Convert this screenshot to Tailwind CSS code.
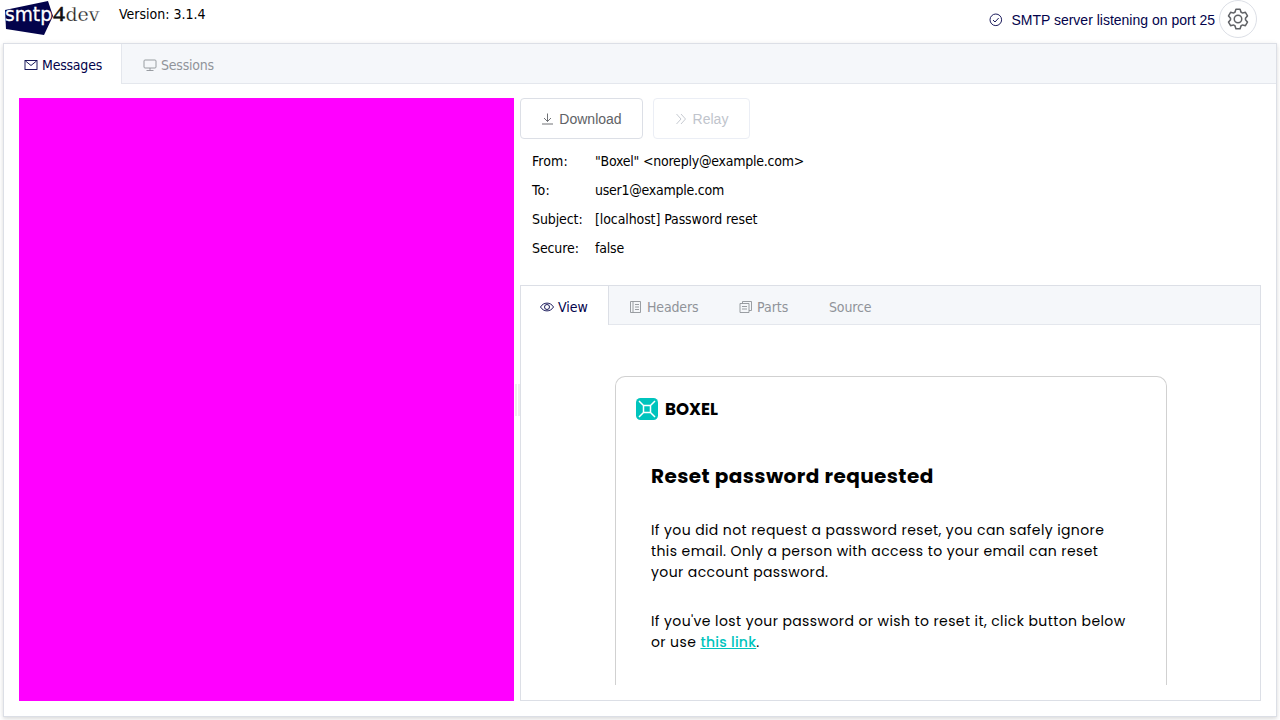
<!DOCTYPE html>
<html lang="en">
<head>
<meta charset="utf-8">
<title>smtp4dev</title>
<script src="https://cdn.jsdelivr.net/npm/@tailwindcss/browser@4"></script>
</head>
<body class="w-[1280px] h-[720px] overflow-hidden bg-white flex flex-col text-sm text-black font-['DejaVu_Sans_Condensed','DejaVu_Sans',sans-serif]">
<header class="h-[43px] shrink-0 flex justify-between">
  <div class="flex">
    <svg class="w-[105px] h-[38px] shrink-0" viewBox="0 0 105 38">
      <polygon points="5,10 48,1 53,16 44,35 6,29" fill="#03034b"/>
      <text x="5" y="20.500" font-family="DejaVu Sans" font-size="19.500" fill="#fff" stroke="#fff" stroke-width=".3" textLength="47" lengthAdjust="spacingAndGlyphs">smtp</text>
      <text x="53" y="20.500" font-family="Liberation Serif" font-size="20" fill="#111" stroke="#111" stroke-width=".5" textLength="12" lengthAdjust="spacingAndGlyphs">4</text>
      <text x="65.500" y="20.500" font-family="DejaVu Serif" font-size="19" fill="#222" stroke="#fff" stroke-width=".25" textLength="34" lengthAdjust="spacingAndGlyphs">dev</text>
    </svg>
    <span class="ml-[14px] mt-[4px] leading-5 whitespace-nowrap">Version: 3.1.4</span>
  </div>
  <div class="flex pr-[23px] font-['Liberation_Sans',sans-serif] text-[#03034b]">
    <svg class="w-[14px] h-[14px] mt-[13px] mr-2" viewBox="0 0 14 14" fill="none" stroke="currentColor" stroke-width=".9"><circle cx="6.800" cy="6.800" r="5.800"/><path d="M4 7l2 2 3.700-4"/></svg>
    <span class="mt-[10px] leading-5 whitespace-nowrap">SMTP server listening on port 25</span>
    <div class="ml-[4px] w-[38px] h-[38px] rounded-full border border-[#dcdfe6] flex items-center justify-center text-[#606266]">
      <svg class="w-[24px] h-[24px]" viewBox="0 0 1024 1024" fill="currentColor"><path d="M600.7 64a32 32 0 0 1 30.5 22.2l35.2 109.4c14.7 7.2 28.7 15.4 42.4 24.4l112.3-24.2a32 32 0 0 1 34.4 15.4L944.3 364.800a32 32 0 0 1-4 37.500l-77.100 85.100a357 357 0 0 1 0 49l77.100 85.200a32 32 0 0 1 4 37.500l-88.700 153.600a32 32 0 0 1-34.400 15.300L708.800 803.900c-13.400 9-27.700 17.200-42.300 24.400l-35.300 109.500A32 32 0 0 1 600.700 960H423.300a32 32 0 0 1-30.500-22.200l-35.100-109.300a351 351 0 0 1-42.600-24.600L202.800 828.200a32 32 0 0 1-34.400-15.400L79.700 659.200a32 32 0 0 1 4-37.500l77.100-85.200a357 357 0 0 1 0-48.900L83.700 402.400a32 32 0 0 1-4-37.500L168.400 211.300a32 32 0 0 1 34.400-15.300l112.300 24.200c13.700-9.100 27.900-17.400 42.600-24.600l35.200-109.400A32 32 0 0 1 423.200 64zm-23.400 64H446.700l-36.400 113-24.500 12c-12 5.900-23.700 12.600-34.800 20.200l-22.800 15.400-116.100-25-65.300 113.200 79.700 88.200-2 27.100a293 293 0 0 0 0 40.200l2 27.100-79.800 88.200 65.300 113.200 116.200-25 22.700 15.300c11.200 7.600 22.800 14.300 34.800 20.200l24.600 12L446.700 896h130.700l36.500-113.100 24.400-12a290 290 0 0 0 34.700-20.100l22.700-15.300 116.300 25 65.300-113.200-79.800-88.200 2-27.100a293 293 0 0 0 0-40.300l-2-27.100 79.800-88.100-65.300-113.200-116.300 24.900-22.700-15.200a290 290 0 0 0-34.700-20.100l-24.400-12zM512 320a192 192 0 1 1 0 384 192 192 0 0 1 0-384m0 64a128 128 0 1 0 0 256 128 128 0 0 0 0-256"/></svg>
    </div>
  </div>
</header>
<main class="mx-[3px] mb-[3px] flex-1 min-h-0 border border-[#dcdfe6] shadow-[0_2px_4px_rgba(0,0,0,0.12),0_0_6px_rgba(0,0,0,0.04)] flex flex-col">
  <nav class="h-10 shrink-0 bg-[#f5f7fa] border-b border-[#e4e7ed] flex text-[#909399]">
    <div class="w-[118px] h-10 bg-white border-r border-[#e4e7ed] flex items-center pl-5 pt-px text-[#03034b] whitespace-nowrap">
      <svg class="w-[14px] h-[14px] mr-1 shrink-0" viewBox="0 0 14 14" fill="none" stroke="currentColor" stroke-width=".9"><rect x="1" y="2.500" width="12" height="9"/><path d="M1.500 3L7 7.500 12.500 3"/></svg><span class="tracking-[-0.22px]">Messages</span>
    </div>
    <div class="flex items-center pl-[21px] pt-[3px] whitespace-nowrap">
      <svg class="w-[14px] h-[14px] mr-1 shrink-0" viewBox="0 0 14 14" fill="none" stroke="currentColor" stroke-width=".9"><rect x="1" y="2" width="12" height="8" rx="1"/><path d="M7 10v2.500M3.500 12.500h7"/></svg><span class="tracking-[-0.22px]">Sessions</span>
    </div>
  </nav>
  <div class="flex-1 min-h-0 flex p-[15px] pt-[14px]">
    <div class="w-[494.500px] mr-[0.500px] shrink-0 bg-[#ff00ff]"></div>
    <div class="w-[6px] shrink-0 flex items-center justify-center gap-px"><i class="w-[2px] h-8 bg-[#eee]"></i><i class="w-[2px] h-8 bg-[#eee]"></i></div>
    <section class="flex-1 min-w-0 flex flex-col">
      <div class="flex gap-[10px] h-[41px] shrink-0 font-['Liberation_Sans',sans-serif]">
        <div class="w-[123px] h-[41px] border border-[#dcdfe6] rounded flex items-center justify-center text-[#606266]">
          <svg class="w-[14px] h-[14px] mr-1" viewBox="0 0 14 14" fill="none" stroke="currentColor" stroke-width=".9"><path d="M6.500 1.500v8M3 6L6.500 9.500 10 6M1 12h11"/></svg><span>Download</span>
        </div>
        <div class="w-[97px] h-[41px] border border-[#ebeef5] rounded flex items-center justify-center text-[#c0c4cc]">
          <svg class="w-[14px] h-[14px] mr-1" viewBox="0 0 14 14" fill="none" stroke="currentColor" stroke-width=".9"><path d="M1.500 2l4.500 5-4.500 5M6 2l4.500 5L6 12"/></svg><span>Relay</span>
        </div>
      </div>
      <div class="pt-[8px] pl-[12px] h-[146px] shrink-0 grid grid-cols-[63px_1fr] auto-rows-[29px] leading-[29px] whitespace-nowrap tracking-[-0.1px]">
        <span class="tracking-[0.1px]">From:</span><span class="tracking-[-0.23px]">"Boxel" &lt;noreply@example.com&gt;</span>
        <span class="tracking-[0.3px]">To:</span><span class="tracking-[-0.25px]">user1@example.com</span>
        <span>Subject:</span><span>[localhost] Password reset</span>
        <span>Secure:</span><span class="tracking-[-0.2px]">false</span>
      </div>
      <div class="flex-1 min-h-0 border border-[#dcdfe6] flex flex-col">
        <nav class="h-[39px] shrink-0 bg-[#f5f7fa] border-b border-[#e4e7ed] flex text-[#909399] whitespace-nowrap">
          <div class="w-[88px] h-[39px] bg-white border-r border-[#dcdfe6] flex items-center pl-[19px] pt-[3px] text-[#03034b]">
            <svg class="w-[14px] h-[14px] mr-1 shrink-0" viewBox="0 0 14 14" fill="none" stroke="currentColor" stroke-width=".9"><path d="M.5 7C3.500 1.800 10.500 1.800 13.500 7 10.500 12.200 3.500 12.200.5 7z"/><circle cx="7" cy="7" r="2.500"/></svg><span>View</span>
          </div>
          <div class="w-[109px] flex items-center pl-5 pt-1"><svg class="w-[14px] h-[14px] mr-1 shrink-0" viewBox="0 0 14 14" fill="none" stroke="currentColor" stroke-width=".9"><path d="M1.500 1.500h10v11h-10zM4 1.500v11M6 4.500h4M6 7h4M6 9.500h4"/></svg><span class="tracking-[-0.15px]">Headers</span></div>
          <div class="w-[91px] flex items-center pl-[21px] pt-1"><svg class="w-[14px] h-[14px] mr-1 shrink-0" viewBox="0 0 14 14" fill="none" stroke="currentColor" stroke-width=".9"><path d="M1 3.500h9v9h-9zM3.500 3.500v-2h9v9h-2.500M3 6.500h5M3 9h5"/></svg><span>Parts</span></div>
          <div class="flex items-center pl-5 pt-1"><span class="tracking-[-0.15px]">Source</span></div>
        </nav>
        <div class="flex-1 min-h-0 pt-[51px] pb-[15px] pl-[94px]">
          <article class="w-[552px] h-full border border-b-0 border-[#d1d1d1] rounded-t-[10px] pt-[21px] font-[Poppins,Inter,sans-serif] whitespace-nowrap">
            <div class="flex items-center h-[22px] pl-5">
              <svg class="w-[22px] h-[22px] mr-[7px]" viewBox="0 0 22 22" fill="none" stroke="#fff" stroke-width="1.500"><rect width="22" height="22" rx="4.500" fill="#00c4bd" stroke="none"/><path d="M7.500 7.500h7v7h-7zM7.500 7.500L3 3M14.500 7.500L19 3M7.500 14.500L3 19M14.500 14.500L19 19"/></svg>
              <svg class="w-[60px] h-[22px]" viewBox="0 0 60 22"><text x="0" y="17" font-size="17" class="font-bold" textLength="53" lengthAdjust="spacingAndGlyphs">BOXEL</text></svg>
            </div>
            <h1 class="mt-[41px] pl-[35px] text-xl leading-[30px] font-bold tracking-[0.42px]">Reset password requested</h1>
            <p class="mt-[29px] pl-[35px] leading-[21px] tracking-[0.4px]">If you did not request a password reset, you can safely ignore<br>this email. Only a person with access to your email can reset<br>your account password.</p>
            <p class="mt-[28px] pl-[35px] leading-[21px] tracking-[0.4px]">If you've lost your password or wish to reset it, click button below<br>or use <a class="text-[#00c4bd] underline font-medium tracking-[0.28px]">this link</a>.</p>
          </article>
        </div>
      </div>
    </section>
  </div>
</main>
</body>
</html>
